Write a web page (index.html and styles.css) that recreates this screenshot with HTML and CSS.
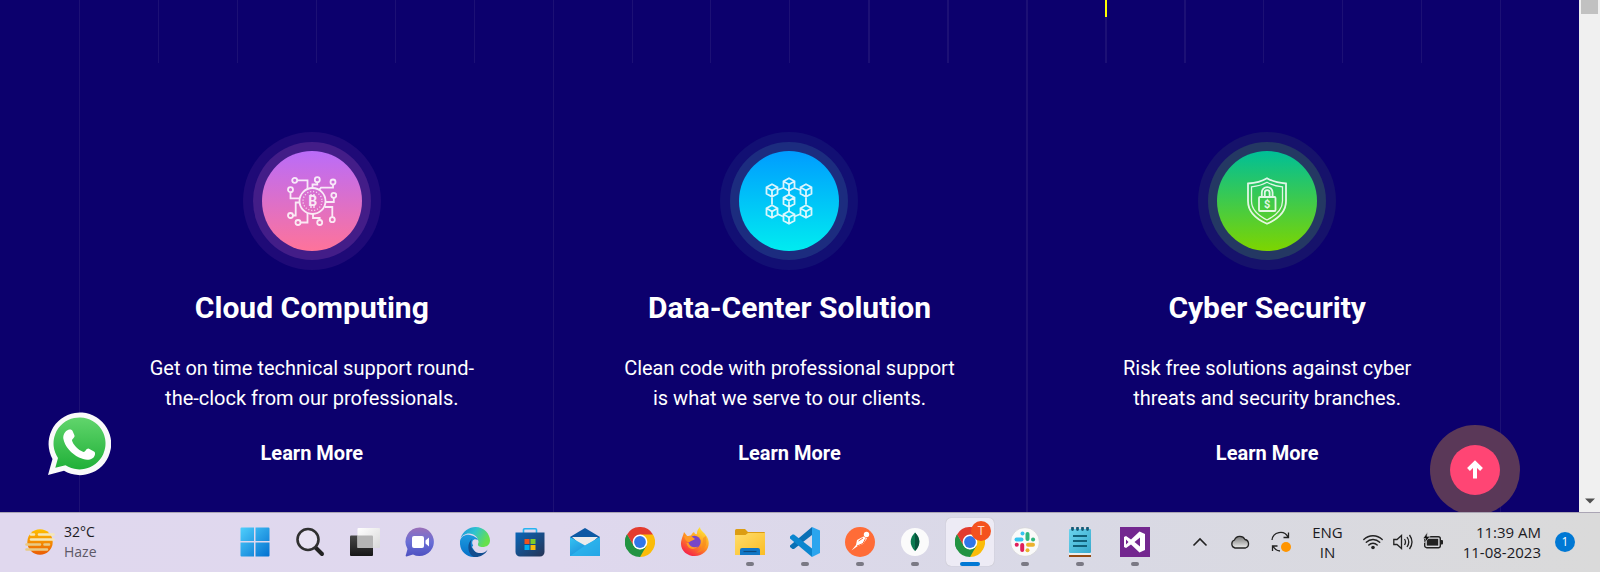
FILE: index.html
```html
<!DOCTYPE html>
<html lang="en">
<head>
<meta charset="utf-8">
<title>Our Services</title>
<meta name="viewport" content="width=device-width, initial-scale=1">
<link rel="stylesheet" href="styles.css">
</head>
<body>
<svg class="defs" aria-hidden="true">
  <defs>
    <symbol id="cube" viewBox="-7 -7 14 14" overflow="visible"><path d="M0-6.2 5.5-3.2V3.2L0 6.2-5.5 3.2V-3.2ZM-5.5-3.2 0 0 5.5-3.2M0 0V6.2"/></symbol>
    <symbol id="chrome" viewBox="0 0 30 30">
      <path fill="#e33b2e" d="M15 15 2 7.500A15 15 0 0 1 28 7.500Z"/>
      <path fill="#fbbc09" d="M15 15V7.500H28A15 15 0 0 1 15 30Z"/>
      <path fill="#229342" d="M2 7.500A15 15 0 0 0 15 30L21.500 18.750 15 22.500 8.500 18.750Z"/>
      <path fill="#e33b2e" d="M2 7.500 8.500 18.750 15 7.500Z"/>
      <path fill="#229342" d="M2 7.500A15 15 0 0 0 2 22.500L8.500 18.750Z"/>
      <circle cx="15" cy="15" r="7.400" fill="#fff"/><circle cx="15" cy="15" r="5.900" fill="#3076e8"/>
    </symbol>
    <linearGradient id="win" x1="0" y1="0" x2="1" y2="1"><stop stop-color="#4fcffc"/><stop offset="1" stop-color="#0270d0"/></linearGradient>
    <linearGradient id="wa" x1="0" y1="0" x2="0" y2="1"><stop stop-color="#61d56c"/><stop offset="1" stop-color="#20b038"/></linearGradient>
    <linearGradient id="sun" x1="0" y1="0" x2="0" y2="1"><stop stop-color="#ffc000"/><stop offset="1" stop-color="#ea5b04"/></linearGradient>
    <linearGradient id="dark" x1="0" y1="0" x2="0" y2="1"><stop stop-color="#484848"/><stop offset="1" stop-color="#161616"/></linearGradient>
    <linearGradient id="light" x1="0" y1="0" x2="1" y2="1"><stop stop-color="#fff"/><stop offset="1" stop-color="#d9d9d9"/></linearGradient>
    <linearGradient id="chat" x1="0" y1="0" x2="0" y2="1"><stop stop-color="#9a6fb8"/><stop offset=".5" stop-color="#6a6fd6"/><stop offset="1" stop-color="#4d50c0"/></linearGradient>
    <linearGradient id="edgeTop" x1="0" y1="0" x2="1" y2=".4"><stop stop-color="#1b8fdc"/><stop offset=".5" stop-color="#2fc3cf"/><stop offset="1" stop-color="#67e04c"/></linearGradient>
    <linearGradient id="edgeLow" x1="0" y1="0" x2="0" y2="1"><stop stop-color="#1e9bdf"/><stop offset="1" stop-color="#0670c8"/></linearGradient>
    <linearGradient id="bag" x1="0" y1="0" x2="1" y2="1"><stop stop-color="#0a66b8"/><stop offset="1" stop-color="#263455"/></linearGradient>
    <linearGradient id="mail" x1="0" y1="0" x2="1" y2="1"><stop stop-color="#35c4f3"/><stop offset="1" stop-color="#1179cf"/></linearGradient>
    <linearGradient id="fox" x1=".8" y1="0" x2=".2" y2="1"><stop stop-color="#fff03a"/><stop offset=".5" stop-color="#ff9020"/><stop offset="1" stop-color="#f4154f"/></linearGradient>
    <linearGradient id="folder" x1="0" y1="0" x2="1" y2="1"><stop stop-color="#ffdd6b"/><stop offset="1" stop-color="#fbbd24"/></linearGradient>
    <linearGradient id="note" x1="0" y1="0" x2="1" y2="1"><stop stop-color="#6ad4ee"/><stop offset="1" stop-color="#38a9cc"/></linearGradient>
    <linearGradient id="haze" x1="0" y1="0" x2="0" y2="1"><stop stop-color="#777"/><stop offset="1" stop-color="#ececec"/></linearGradient>
  </defs>
</svg>

<div class="browser">
  <main class="page">
    <div class="guides" aria-hidden="true">
      <span></span><span class="long"></span><span></span><span></span><span></span><span></span><span></span><span class="long"></span><span></span><span></span><span></span><span class="wide"></span><span class="wide"></span><span class="long wide"></span><span class="wide marker"></span><span class="wide"></span><span></span><span></span><span></span><span class="long"></span>
    </div>
    <section class="services">
      <article class="service cloud">
        <div class="halo"><div class="ring"><div class="disc">
          <svg width="50" height="50" viewBox="0 0 50 50" class="outline">
            <circle cx="25.500" cy="25" r="13"/><circle cx="25.500" cy="25" r="9.500" stroke-width="1.300" stroke-dasharray="1.200 1.800" opacity=".8"/>
            <circle cx="7.700" cy="4.300" r="2.500"/><circle cx="30.300" cy="3.700" r="2.500"/><circle cx="46" cy="6" r="2.500"/><circle cx="3.500" cy="13.700" r="2.500"/><circle cx="46.800" cy="19.300" r="2.500"/><circle cx="3.500" cy="39.500" r="2.500"/><circle cx="45.300" cy="43.700" r="2.500"/><circle cx="11" cy="46.500" r="2.500"/><circle cx="32.700" cy="46.500" r="2.500"/>
            <path d="M10.200 4.300H20.500V13M30.300 6.200V8.500H25.500V12M46 8.500V11.700H34L32 14M3.500 16.200V22.300H12.500M46.800 21.800V26H38.500M6 39.500H8.700V26.500H12.500M45.300 41.200V31H38M13.500 46.500H20.500V37M32.700 44V42H26V38"/>
            <path d="M24 18v3M27 18v3M24 29v3M27 29v3" stroke-width="1.300"/>
            <text x="25.700" y="30" text-anchor="middle" class="coin">B</text>
          </svg>
        </div></div></div>
        <h2>Cloud Computing</h2>
        <p>Get on time technical support round-the-clock from our professionals.</p>
        <a href="#cloud">Learn More</a>
      </article>
      <article class="service data">
        <div class="halo"><div class="ring"><div class="disc">
          <svg width="48" height="48" viewBox="-.5 -.5 48 48" class="outline">
            <path d="M17.500 10.500 12 12.500M29 10.500 34.500 12.500M6.500 20V27M40.500 20V27M12 36.500 17.500 39M35 36.500 29 39M23.500 13.500V17M23.500 30V33.500"/>
            <use href="#cube" x="16.500" y="0" width="14" height="14"/><use href="#cube" x="-.5" y="6" width="14" height="14"/><use href="#cube" x="33.500" y="6" width="14" height="14"/><use href="#cube" x="16.500" y="16.300" width="14" height="14"/><use href="#cube" x="-.5" y="27" width="14" height="14"/><use href="#cube" x="33.500" y="27" width="14" height="14"/><use href="#cube" x="16.500" y="33" width="14" height="14"/>
          </svg>
        </div></div></div>
        <h2>Data-Center Solution</h2>
        <p>Clean code with professional support is what we serve to our clients.</p>
        <a href="#data">Learn More</a>
      </article>
      <article class="service cyber">
        <div class="halo"><div class="ring"><div class="disc">
          <svg width="42" height="48" viewBox="0 0 42 48" class="outline">
            <path d="M21 1.200C27 4.800 33 6 40 6.500V24C40 34 32 42 21 46.800 10 42 2 34 2 24V6.500C9 6 15 4.800 21 1.200Z"/>
            <path d="M21 5.200C26 8 31 9.200 36.500 9.800V24C36.500 32 30 38.500 21 43 12 38.500 5.500 32 5.500 24V9.800C11 9.200 16 8 21 5.200Z" stroke-width="1.300"/>
            <rect x="13" y="20" width="16.500" height="14" rx="1"/>
            <path d="M15.800 20V15.500a5.400 5.400 0 0 1 10.800 0V20M18.800 20V15.500a2.400 2.400 0 0 1 4.800 0V20"/>
            <text x="21.200" y="31" text-anchor="middle" class="dollar">$</text>
          </svg>
        </div></div></div>
        <h2>Cyber Security</h2>
        <p>Risk free solutions against cyber threats and security branches.</p>
        <a href="#cyber">Learn More</a>
      </article>
    </section>
    <a class="whatsapp" href="#chat" aria-label="Chat on WhatsApp">
      <svg width="64" height="64" viewBox="0 0 64 64">
        <path fill="#fafafa" d="M1 63 5.500 47A31.300 31.300 0 1 1 17 58.800Z"/>
        <path fill="url(#wa)" d="M8.300 55.800 11 46A26 26 0 1 1 18.500 53.300Z"/>
        <path fill="#fff" d="M21 18C23 17 25 17.500 25.800 19.500L27.500 23.500C28 25.500 25 27 25 28.500 26 32.500 31 38 36.500 40 38.500 40 39 36.500 41.500 36.500L47 39.500C49 40.500 48 45 45.500 46.300 41 49 36.500 47.500 32 45.500 24.500 42 17.500 34 16.300 26.500 16 23 18 19 21 18Z"/>
      </svg>
    </a>
    <button class="to-top" type="button" aria-label="Back to top">
      <span><svg width="18" height="20" viewBox="0 0 18 20"><path d="M9 18.500V3M2.500 9.500 9 3l6.500 6.500" fill="none" stroke="#fff" stroke-width="4"/></svg></span>
    </button>
  </main>
  <div class="scrollbar" aria-hidden="true"><i class="thumb"></i><svg width="10" height="6" viewBox="0 0 10 6"><path d="M0 .5H10L5 5.500Z" fill="#505050"/></svg></div>
</div>

<footer class="taskbar">
  <button class="weather" type="button">
    <svg width="30" height="28" viewBox="0 0 30 28"><circle cx="15" cy="14" r="12.700" fill="url(#sun)"/><g stroke-width="2.600" stroke-linecap="round" fill="none"><path d="M6 6.500H9M14 6.500H28.500M6 11.500H28.500" stroke="#f5e7b8"/><path d="M1.500 16.500H15M19.500 16.500H24M1.500 21.500H22" stroke="#e8ca86"/></g></svg>
    <span>32°C<small>Haze</small></span>
  </button>

  <nav class="apps">
    <button type="button" aria-label="Start"><svg width="30" height="30" viewBox="0 0 30 30"><path fill="url(#win)" d="M.5 1.500a1 1 0 0 1 1-1H14V14H.5ZM15.500.5H28.500a1 1 0 0 1 1 1V14H15.500ZM.5 15.500H14V29.500H1.500a1 1 0 0 1-1-1ZM15.500 15.500H29.500V28.500a1 1 0 0 1-1 1H15.500Z"/></svg></button>
    <button type="button" aria-label="Search"><svg width="30" height="30" viewBox="0 0 30 30"><path d="M20 20 27 27" stroke="#222" stroke-width="4" stroke-linecap="round"/><circle cx="13" cy="12.500" r="10.500" fill="#e8e2f2" stroke="#303030" stroke-width="2.600"/></svg></button>
    <button type="button" aria-label="Task view"><svg width="30" height="30" viewBox="0 0 30 30"><rect y="8.500" width="23" height="20.500" rx="1" fill="url(#dark)"/><rect x="7.500" y="1" width="22.500" height="20" rx="1" fill="url(#light)"/><path d="M7.500 8.500H22a1 1 0 0 1 1 1V21H7.500Z" fill="#b5b5b5"/></svg></button>
    <button type="button" aria-label="Chat"><svg width="30" height="30" viewBox="0 0 30 30"><path fill="url(#chat)" d="M15 .5A14.300 14.300 0 1 1 8 27.500L1.500 29.500C.5 29.500.5 28.500 1 27.500L2.500 22A14.300 14.300 0 0 1 15 .5Z"/><rect x="7" y="9" width="12" height="12" rx="2" fill="#fff"/><path fill="#fff" d="M20.500 13.500 24 10.500V19.500L20.500 16.500Z"/></svg></button>
    <button type="button" aria-label="Edge"><svg width="30" height="30" viewBox="0 0 30 30"><path fill="url(#edgeLow)" d="M0 14C1 9 6 7 10 8 15 9 18 12 18 12L12 20 18 29.500C8 32-1 25 0 14Z"/><path fill="url(#edgeTop)" d="M.5 11.500C3 4 9 0 15.500 0 24 0 30 7 30 13.500 30 18 26.500 20 22.500 20 19.500 20 17.500 19 18 17 20 11 14 6.500 9 6.500 5 6.500 2 9 .5 11.500Z"/><path fill="#124d8f" d="M12 12C8 19 14 27 22 26 25 25.500 27 23.500 27.500 22.500 27 26 20 31 14 30 8 28 6 17 12 12Z"/><path fill="#e0d9ee" d="M12.500 14C14 10.800 19 12 18.300 15.500 18 17 17 17.300 17.500 19 18 20 19 20.500 20 21 15 21.500 11 18 12.500 14Z"/></svg></button>
    <button type="button" aria-label="Store"><svg width="30" height="30" viewBox="0 0 30 30"><path d="M8.500 7V3A1.200 1.200 0 0 1 9.700 1.700H20.300A1.200 1.200 0 0 1 21.500 3V7" fill="none" stroke="#26b4f0" stroke-width="1.600"/><path fill="url(#bag)" d="M.5 5.500H29.500V25a4.500 4.500 0 0 1-4.500 4.500H5A4.500 4.500 0 0 1 .5 25Z"/><path fill="#f1511b" d="M9.500 12h5v5h-5z"/><path fill="#80cc28" d="M15.500 12h5v5h-5z"/><path fill="#00adef" d="M9.500 18h5v5h-5z"/><path fill="#fbbc09" d="M15.500 18h5v5h-5z"/></svg></button>
    <button type="button" aria-label="Mail"><svg width="30" height="30" viewBox="0 0 30 30"><path fill="#0c59a4" d="M0 10 15 1 30 10V14H0Z"/><path fill="#ececec" d="M2 10H28L15 22Z"/><path fill="url(#mail)" d="M0 10 15 18.500 30 10V29H0Z"/><path fill="#2fb9f0" d="M0 29 15 18.500 30 10V29Z" opacity=".7"/><path fill="#1c8bd6" d="M15 18.500 30 29V28L30 29Z"/></svg></button>
    <button type="button" aria-label="Chrome"><svg width="30" height="30"><use href="#chrome" width="30" height="30"/></svg></button>
    <button type="button" aria-label="Firefox"><svg width="30" height="30" viewBox="0 0 30 30"><path fill="url(#fox)" d="M4 5 7.500 9.500C9 8.500 10 8.500 11 8.500 12 6 14 5 14 5 15 7.500 17 8 17 6 17 3 19 1 20 0 20 4 26 6 28 12 31 21 24 29 15 29 6 29-1 22 1.500 13 2 10 3.500 8 4 5Z"/><path fill="#f58b1e" d="M26 9C28 18 24 25 16 26L22 21 23 11Z" opacity=".6"/><circle cx="14.500" cy="15" r="6.200" fill="#7846c8"/><path fill="#ff9a25" d="M4 9 11 9 15 12C13 14 10 13.500 9 15.500 7 15 5 13 4 9ZM8.500 16C10 20 14 21 18 19.500 14 24 7.500 22 6.500 16Z"/></svg></button>
    <button type="button" class="open" aria-label="File Explorer"><svg width="30" height="30" viewBox="0 0 30 30"><path fill="#dc9d12" d="M0 3.500A1.500 1.500 0 0 1 1.500 2H10L13 5H29A1 1 0 0 1 30 6V12H0Z"/><path fill="url(#folder)" d="M0 8H10.500L13 6H30V28H0Z"/><path fill="#1176c5" d="M5 28V23a2 2 0 0 1 2-2H23a2 2 0 0 1 2 2V28Z"/><path d="M8.500 24.500H21.500" stroke="#0c4a80" stroke-width="1.200"/></svg></button>
    <button type="button" class="open" aria-label="Visual Studio Code"><svg width="30" height="30" viewBox="0 0 30 30"><path fill="#0a70b5" d="M22 0V8L4 22 2.500 22 0 20V18.500Z"/><path fill="#0b86cf" d="M0 9.500 2.500 7.500H4L22 21.500V30L0 11.500Z"/><path fill="#2ba5ee" d="M22 0 30 3.500V26L22 30Z"/></svg></button>
    <button type="button" class="open" aria-label="Postman"><svg width="30" height="30" viewBox="0 0 30 30"><circle cx="15" cy="15" r="15" fill="#ff6c37"/><circle cx="21.500" cy="7.500" r="2.700" fill="#fff"/><path fill="#fff" d="M12 13 18.500 9.500 22 11.500 18 17 12 19.500 6.500 23.500 11 18Z"/><path d="M13.500 14 18 11M20.500 11.500 18 16.500 12 19" stroke="#ff6c37" fill="none"/></svg></button>
    <button type="button" class="open" aria-label="MongoDB Compass"><svg width="30" height="30" viewBox="0 0 30 30"><circle cx="15" cy="15" r="14" fill="#fbfbfb"/><path fill="#0a7a50" d="M15 5.500C20.500 11 21 18 15 24 9 18 9.500 11 15 5.500Z"/><path fill="#06543c" d="M15 5.500C20.500 11 21 18 15 24Z"/></svg></button>
    <button type="button" class="open active" aria-label="Chrome, profile T"><svg width="30" height="30"><use href="#chrome" width="30" height="30"/></svg><span class="profile">T</span></button>
    <button type="button" class="open" aria-label="Slack"><svg width="30" height="30" viewBox="0 0 30 30"><circle cx="15" cy="15" r="14.300" fill="#fafafa" stroke="#ccc" stroke-width=".5"/><g stroke-width="4" stroke-linecap="round"><path d="M6.500 12.500H11.500" stroke="#36c5f0"/><path d="M12.500 6.500V6.600" stroke="#36c5f0"/><path d="M17.500 7V12" stroke="#2eb67d"/><path d="M23 12.500H23.100" stroke="#2eb67d"/><path d="M18 17.800H23" stroke="#ecb22e"/><path d="M17.500 23.200V23.300" stroke="#ecb22e"/><path d="M12.200 18V23" stroke="#e01e5a"/><path d="M6.700 17.800H6.800" stroke="#e01e5a"/></g></svg></button>
    <button type="button" class="open" aria-label="Notepad"><svg width="30" height="30" viewBox="0 0 30 30"><path fill="#954a12" d="M4 26H26V30H4Z"/><path fill="#eee" d="M4 24H26V28H4Z"/><rect x="4" y="2" width="22" height="24" rx="1" fill="url(#note)"/><path d="M8 9H22M8 14H22M8 19H22" stroke="#116079" stroke-width="1.800"/><path d="M7.500 1V2.500M12.500 1V2.500M17.500 1V2.500M22.500 1V2.500" stroke="#155a75" stroke-width="2.800" stroke-linecap="round"/></svg></button>
    <button type="button" class="open" aria-label="Visual Studio"><svg width="30" height="30" viewBox="0 0 30 30"><path fill="#73278f" d="M0 0H30V30H0Z"/><path fill="#fff" fill-rule="evenodd" d="M19.500 4.500 25 7V23L19.500 25.500 11 17.500 6 21 4 20V10L6 9 11 12.500ZM20 10.500 14.500 15 20 19.500ZM6 12.500V17.500L8.500 15Z"/></svg></button>
  </nav>

  <div class="tray">
    <button type="button" aria-label="Show hidden icons"><svg width="20" height="20" viewBox="0 0 20 20"><path d="M3.500 13.500 10 7 16.500 13.500" fill="none" stroke="#222" stroke-width="1.600"/></svg></button>
    <button type="button" aria-label="OneDrive"><svg width="20" height="20" viewBox="0 0 20 20"><path d="M5 16A4.200 4.200 0 0 1 4.500 8 5.800 5.800 0 0 1 15 7.500 4.400 4.400 0 0 1 15.500 16Z" fill="url(#haze)" stroke="#222" stroke-width="1.300"/></svg></button>
    <button type="button" aria-label="Updates available"><svg width="22" height="22" viewBox="0 0 22 22"><path d="M2 9A8.500 8.500 0 0 1 18 6M18.500 1.500V6.500H13.500M10 20A8.500 8.500 0 0 1 3 15M2.500 20V15H7.500" fill="none" stroke="#222" stroke-width="1.300"/><circle cx="16" cy="16" r="5" fill="#ff9500"/></svg></button>
    <button type="button" class="lang">ENG<br>IN</button>
    <button type="button" class="status" aria-label="Network, volume and battery">
      <svg width="20" height="20" viewBox="0 0 20 20"><g fill="none" stroke="#222" stroke-width="1.400" stroke-linecap="round"><path d="M.8 7.500A13 13 0 0 1 19.200 7.500M3.300 10.300A9.500 9.500 0 0 1 16.700 10.300M5.800 13A6 6 0 0 1 14.200 13"/></g><circle cx="10" cy="15.500" r="1.800" fill="#222"/></svg>
      <svg width="20" height="20" viewBox="0 0 20 20"><path d="M.8 7.500H4L8.500 3.500V16.500L4 12.500H.8ZM11.500 7Q13.500 10 11.500 13M14 5Q17.500 10 14 15M16.500 3Q21.500 10 16.500 17" fill="none" stroke="#222" stroke-width="1.300"/></svg>
      <svg width="20" height="20" viewBox="0 0 20 20"><rect x="1.700" y="4.700" width="15.600" height="11" rx="2" fill="none" stroke="#222" stroke-width="1.400"/><rect x="3.800" y="6.800" width="11.400" height="6.800" fill="#222"/><path d="M18 8h1a1 1 0 0 1 1 1v2.500a1 1 0 0 1-1 1h-1Z" fill="#222"/><path d="M4.500 0 0 6.500H2.500L1.500 11 7 4.500H4Z" fill="#111" stroke="#dcdcdf" stroke-width=".6"/></svg>
    </button>
    <button type="button" class="clock">11:39 AM<br>11-08-2023</button>
    <button type="button" class="badge" aria-label="1 notification">1</button>
  </div>
</footer>
</body>
</html>
```
FILE: styles.css
```css
*, *::before, *::after { box-sizing: border-box; }

body {
  margin: 0;
  min-height: 100vh;
  display: flex;
  flex-direction: column;
  font-family: Roboto, "Liberation Sans", sans-serif;
  color: #fff;
}

button {
  border: 0;
  padding: 0;
  background: none;
  color: inherit;
  font: inherit;
}

svg { display: block; flex: none; }
.defs { position: absolute; width: 0; height: 0; }

.browser { flex: 1; display: flex; background: #0c006d; }
.page { position: relative; flex: 1; overflow: hidden; }

/* Vertical guide lines behind the content */
.guides { position: absolute; inset: 0; display: flex; align-items: flex-start; }
.guides span { flex: 0 0 5%; height: 63px; border-left: 1px solid #1c1075; }
.guides span:first-child { border-color: transparent; }
.guides .wide { border-left-width: 2px; }
.guides .long { height: 100%; }
.guides .marker::before {
  content: "";
  display: block;
  width: 2px;
  height: 17px;
  margin-left: -2px;
  background: #ff0;
}

.services {
  position: relative;
  display: grid;
  grid-template-columns: repeat(3, 1fr);
  padding: 132px 73px 44px;
}
.service {
  display: flex;
  flex-direction: column;
  align-items: center;
  text-align: center;
  padding: 0 66px;
}
.halo { padding: 10px; border-radius: 50%; }
.ring { padding: 9px; border-radius: 50%; }
.disc {
  width: 100px;
  height: 100px;
  border-radius: 50%;
  display: grid;
  place-items: center;
}
.cloud .halo { background: #1f0a77; }
.cloud .ring { background: #431d88; }
.cloud .disc { background: linear-gradient(#ba6cf9, #fe739a); }
.data .halo { background: #120f73; }
.data .ring { background: #1c2c7f; }
.data .disc { background: linear-gradient(#009cff, #00ecf0); }
.cyber .halo { background: #16126b; }
.cyber .ring { background: #243863; }
.cyber .disc { background: linear-gradient(#00bf97, #7dd500); }

.outline { fill: none; stroke: #fff; stroke-width: 1.8; opacity: .85; }
.outline text { fill: #fff; stroke: none; font-weight: 700; }
.coin { font-size: 14px; }
.dollar { font-size: 11px; }

h2 { margin: 20px 0 27px; font-size: 30px; line-height: 36px; font-weight: 700; }
.service p { margin: 0 0 25px; font-size: 20px; line-height: 30px; }
.service a { color: #fff; font-size: 20px; line-height: 30px; font-weight: 700; text-decoration: none; }

.whatsapp { position: absolute; left: 47px; bottom: 36px; }
.to-top {
  position: absolute;
  right: 59px;
  bottom: -3px;
  padding: 20px;
  border-radius: 50%;
  background: rgba(93, 58, 88, .97);
}
.to-top span {
  display: grid;
  place-items: center;
  width: 50px;
  height: 50px;
  border-radius: 50%;
  background: #ff4574;
}

.scrollbar {
  flex: none;
  width: 21px;
  display: flex;
  flex-direction: column;
  align-items: center;
  justify-content: space-between;
  padding-bottom: 8px;
  background: #f0f0f0;
}
.thumb { width: 17px; height: 14px; background: #c1c1c1; }

.taskbar {
  display: flex;
  align-items: center;
  height: 60px;
  padding: 0 25px 1px 0;
  border-top: 1px solid #aaa5b4;
  background: linear-gradient(90deg, #e0d8ee, #dfd8ee 35%, #d9d9e6 65%, #dadada);
  color: #1b1b1f;
  font-family: "Open Sans", "Noto Sans", sans-serif;
  font-size: 15px;
  line-height: 20px;
}
.weather {
  flex: 0 0 231px;
  display: flex;
  align-items: center;
  gap: 9px;
  padding-left: 25px;
  font-size: 14px;
  text-align: left;
}
.weather small { display: block; font-size: 14px; color: #5d5967; }

.apps { display: flex; gap: 7px; }
.apps button {
  position: relative;
  width: 48px;
  height: 48px;
  display: grid;
  place-items: center;
  border-radius: 5px;
}
.apps .open::after {
  content: "";
  position: absolute;
  left: 20px;
  bottom: 0;
  width: 8px;
  height: 4px;
  border-radius: 2px;
  background: #7a7984;
}
.apps .active { background: #edebf5; box-shadow: 0 0 1px #aaa; }
.apps .active::after { left: 14px; width: 20px; background: #0078d4; }
.profile {
  position: absolute;
  top: 3px;
  right: 3px;
  width: 20px;
  border-radius: 50%;
  background: #f4511e;
  color: #ffd9cc;
  font: 12px/20px Roboto, sans-serif;
}

.tray { margin-left: auto; display: flex; align-items: center; gap: 20px; }
.status { display: flex; gap: 10px; }
.clock { text-align: right; }
.badge {
  width: 20px;
  height: 20px;
  margin-left: -6px;
  border-radius: 50%;
  background: #0078d4;
  color: #fff;
  font-size: 12px;
}
```
